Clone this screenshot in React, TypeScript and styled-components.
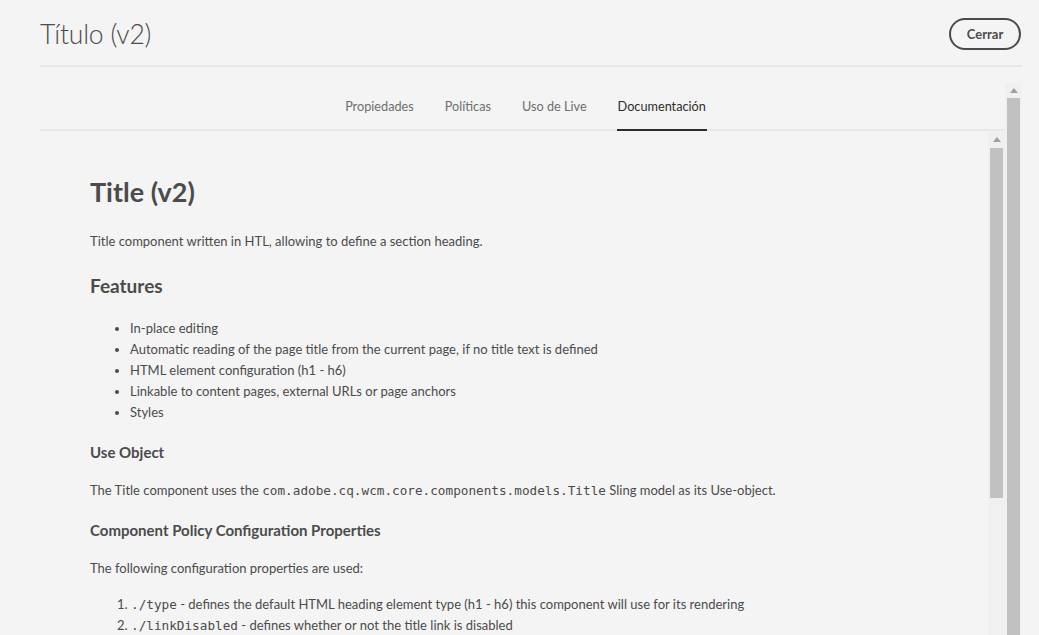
import styled, { createGlobalStyle } from "styled-components";

const GlobalStyle = createGlobalStyle`
  html, body {
    margin: 0;
    padding: 0;
    height: 100%;
    overflow: hidden;
    background: #f4f4f4;
  }
  body {
    font-family: Lato, "Open Sans", sans-serif;
    color: #4b4b4b;
  }
`;

const tabs = ["Propiedades", "Políticas", "Uso de Live", "Documentación"];

const features = [
  "In-place editing",
  "Automatic reading of the page title from the current page, if no title text is defined",
  "HTML element configuration (h1 - h6)",
  "Linkable to content pages, external URLs or page anchors",
  "Styles",
];

const ScrollBar = ({ thumb }: { thumb: number }) => (
  <Track>
    <ArrowButton>
      <svg width="8" height="5" viewBox="0 0 8 5">
        <path d="M4 0 L8 5 L0 5 Z" fill="#a0a0a0" />
      </svg>
    </ArrowButton>
    <Thumb style={{ height: thumb }} />
  </Track>
);

const App = () => {
  return (
    <>
      <GlobalStyle />
      <Page>
        <Header>
          <Title>Título (v2)</Title>
          <CloseButton>Cerrar</CloseButton>
        </Header>
        <Body>
          <Main>
            <TabBar>
              {tabs.map((t) => (
                <Tab key={t} $active={t === "Documentación"}>
                  {t}
                </Tab>
              ))}
            </TabBar>
            <Panel>
              <Doc>
                <H1>Title (v2)</H1>
                <P $gap={21}>
                  Title component written in HTL, allowing to define a section
                  heading.
                </P>
                <H2>Features</H2>
                <Bullets>
                  {features.map((f) => (
                    <li key={f}>{f}</li>
                  ))}
                </Bullets>
                <H3 $gap={18}>Use Object</H3>
                <P $gap={17}>
                  The Title component uses the{" "}
                  <Code>com.adobe.cq.wcm.core.components.models.Title</Code>{" "}
                  Sling model as its Use-object.
                </P>
                <H3 $gap={18}>Component Policy Configuration Properties</H3>
                <P $gap={17}>The following configuration properties are used:</P>
                <Numbered>
                  <li>
                    <Code>./type</Code> - defines the default HTML heading
                    element type (h1 - h6) this component will use for its
                    rendering
                  </li>
                  <li>
                    <Code>./linkDisabled</Code> - defines whether or not the
                    title link is disabled
                  </li>
                </Numbered>
              </Doc>
              <ScrollBar thumb={350} />
            </Panel>
          </Main>
          <ScrollBar thumb={600} />
        </Body>
      </Page>
    </>
  );
};

const Page = styled.div`
  height: 635px;
  padding: 0 17px 0 40px;
  display: flex;
  flex-direction: column;
  overflow: hidden;
`;

const Header = styled.header`
  height: 67px;
  box-sizing: border-box;
  padding: 3px 1px 0 0;
  flex: none;
  display: flex;
  align-items: center;
  justify-content: space-between;
  border-bottom: 2px solid #e8e8e8;
`;

const Title = styled.h1`
  margin: 0;
  font-size: 26.5px;
  font-weight: 300;
  color: #4b4b4b;
  letter-spacing: -0.2px;
`;

const CloseButton = styled.button`
  width: 72px;
  height: 32px;
  border: 2px solid #4b4b4b;
  border-radius: 16px;
  background: transparent;
  color: #4b4b4b;
  font-family: inherit;
  font-size: 13px;
  font-weight: 700;
  cursor: pointer;
`;

const Body = styled.div`
  flex: 1;
  display: flex;
  margin-top: 16px;
  min-height: 0;
`;

const Main = styled.div`
  flex: 1;
  display: flex;
  flex-direction: column;
  min-width: 0;
`;

const TabBar = styled.nav`
  height: 46px;
  flex: none;
  display: flex;
  justify-content: center;
  align-items: flex-end;
  gap: 29px;
  border-bottom: 2px solid #e8e8e8;
  padding-left: 6px;
`;

const Tab = styled.div<{ $active?: boolean }>`
  height: 46px;
  box-sizing: border-box;
  display: flex;
  align-items: center;
  margin-bottom: -2px;
  padding: 0 1px 2px;
  font-size: 12.7px;
  color: ${(p) => (p.$active ? "#2c2c2c" : "#6e6e6e")};
  border-bottom: 2px solid ${(p) => (p.$active ? "#2c2c2c" : "transparent")};
`;

const Panel = styled.div`
  flex: 1;
  display: flex;
  min-height: 0;
`;

const Doc = styled.article`
  flex: 1;
  padding: 43px 0 0 50px;
  overflow: hidden;
  font-size: 13px;
  line-height: 21px;
`;

const H1 = styled.h1`
  margin: 0;
  font-size: 27px;
  line-height: 36px;
  font-weight: 700;
`;

const H2 = styled.h2`
  margin: 21px 0 0;
  font-size: 19px;
  line-height: 26px;
  font-weight: 700;
`;

const H3 = styled.h3<{ $gap: number }>`
  margin: ${(p) => p.$gap}px 0 0;
  font-size: 15px;
  line-height: 22px;
  font-weight: 700;
`;

const P = styled.p<{ $gap: number }>`
  margin: ${(p) => p.$gap}px 0 0;
`;

const Code = styled.code`
  font-family: "DejaVu Sans Mono", monospace;
  font-size: 12.7px;
`;

const Bullets = styled.ul`
  margin: 19px 0 0;
  padding-left: 40px;
`;

const Numbered = styled.ol`
  margin: 15px 0 0;
  padding-left: 41px;
  line-height: 20px;
`;

const Track = styled.div`
  width: 17px;
  flex: none;
  display: flex;
  flex-direction: column;
  align-items: center;
  background: #f0f0f0;
`;

const ArrowButton = styled.div`
  width: 17px;
  height: 17px;
  display: flex;
  align-items: center;
  justify-content: center;
`;

const Thumb = styled.div`
  width: 13px;
  background: #c1c1c1;
`;

export default App;
